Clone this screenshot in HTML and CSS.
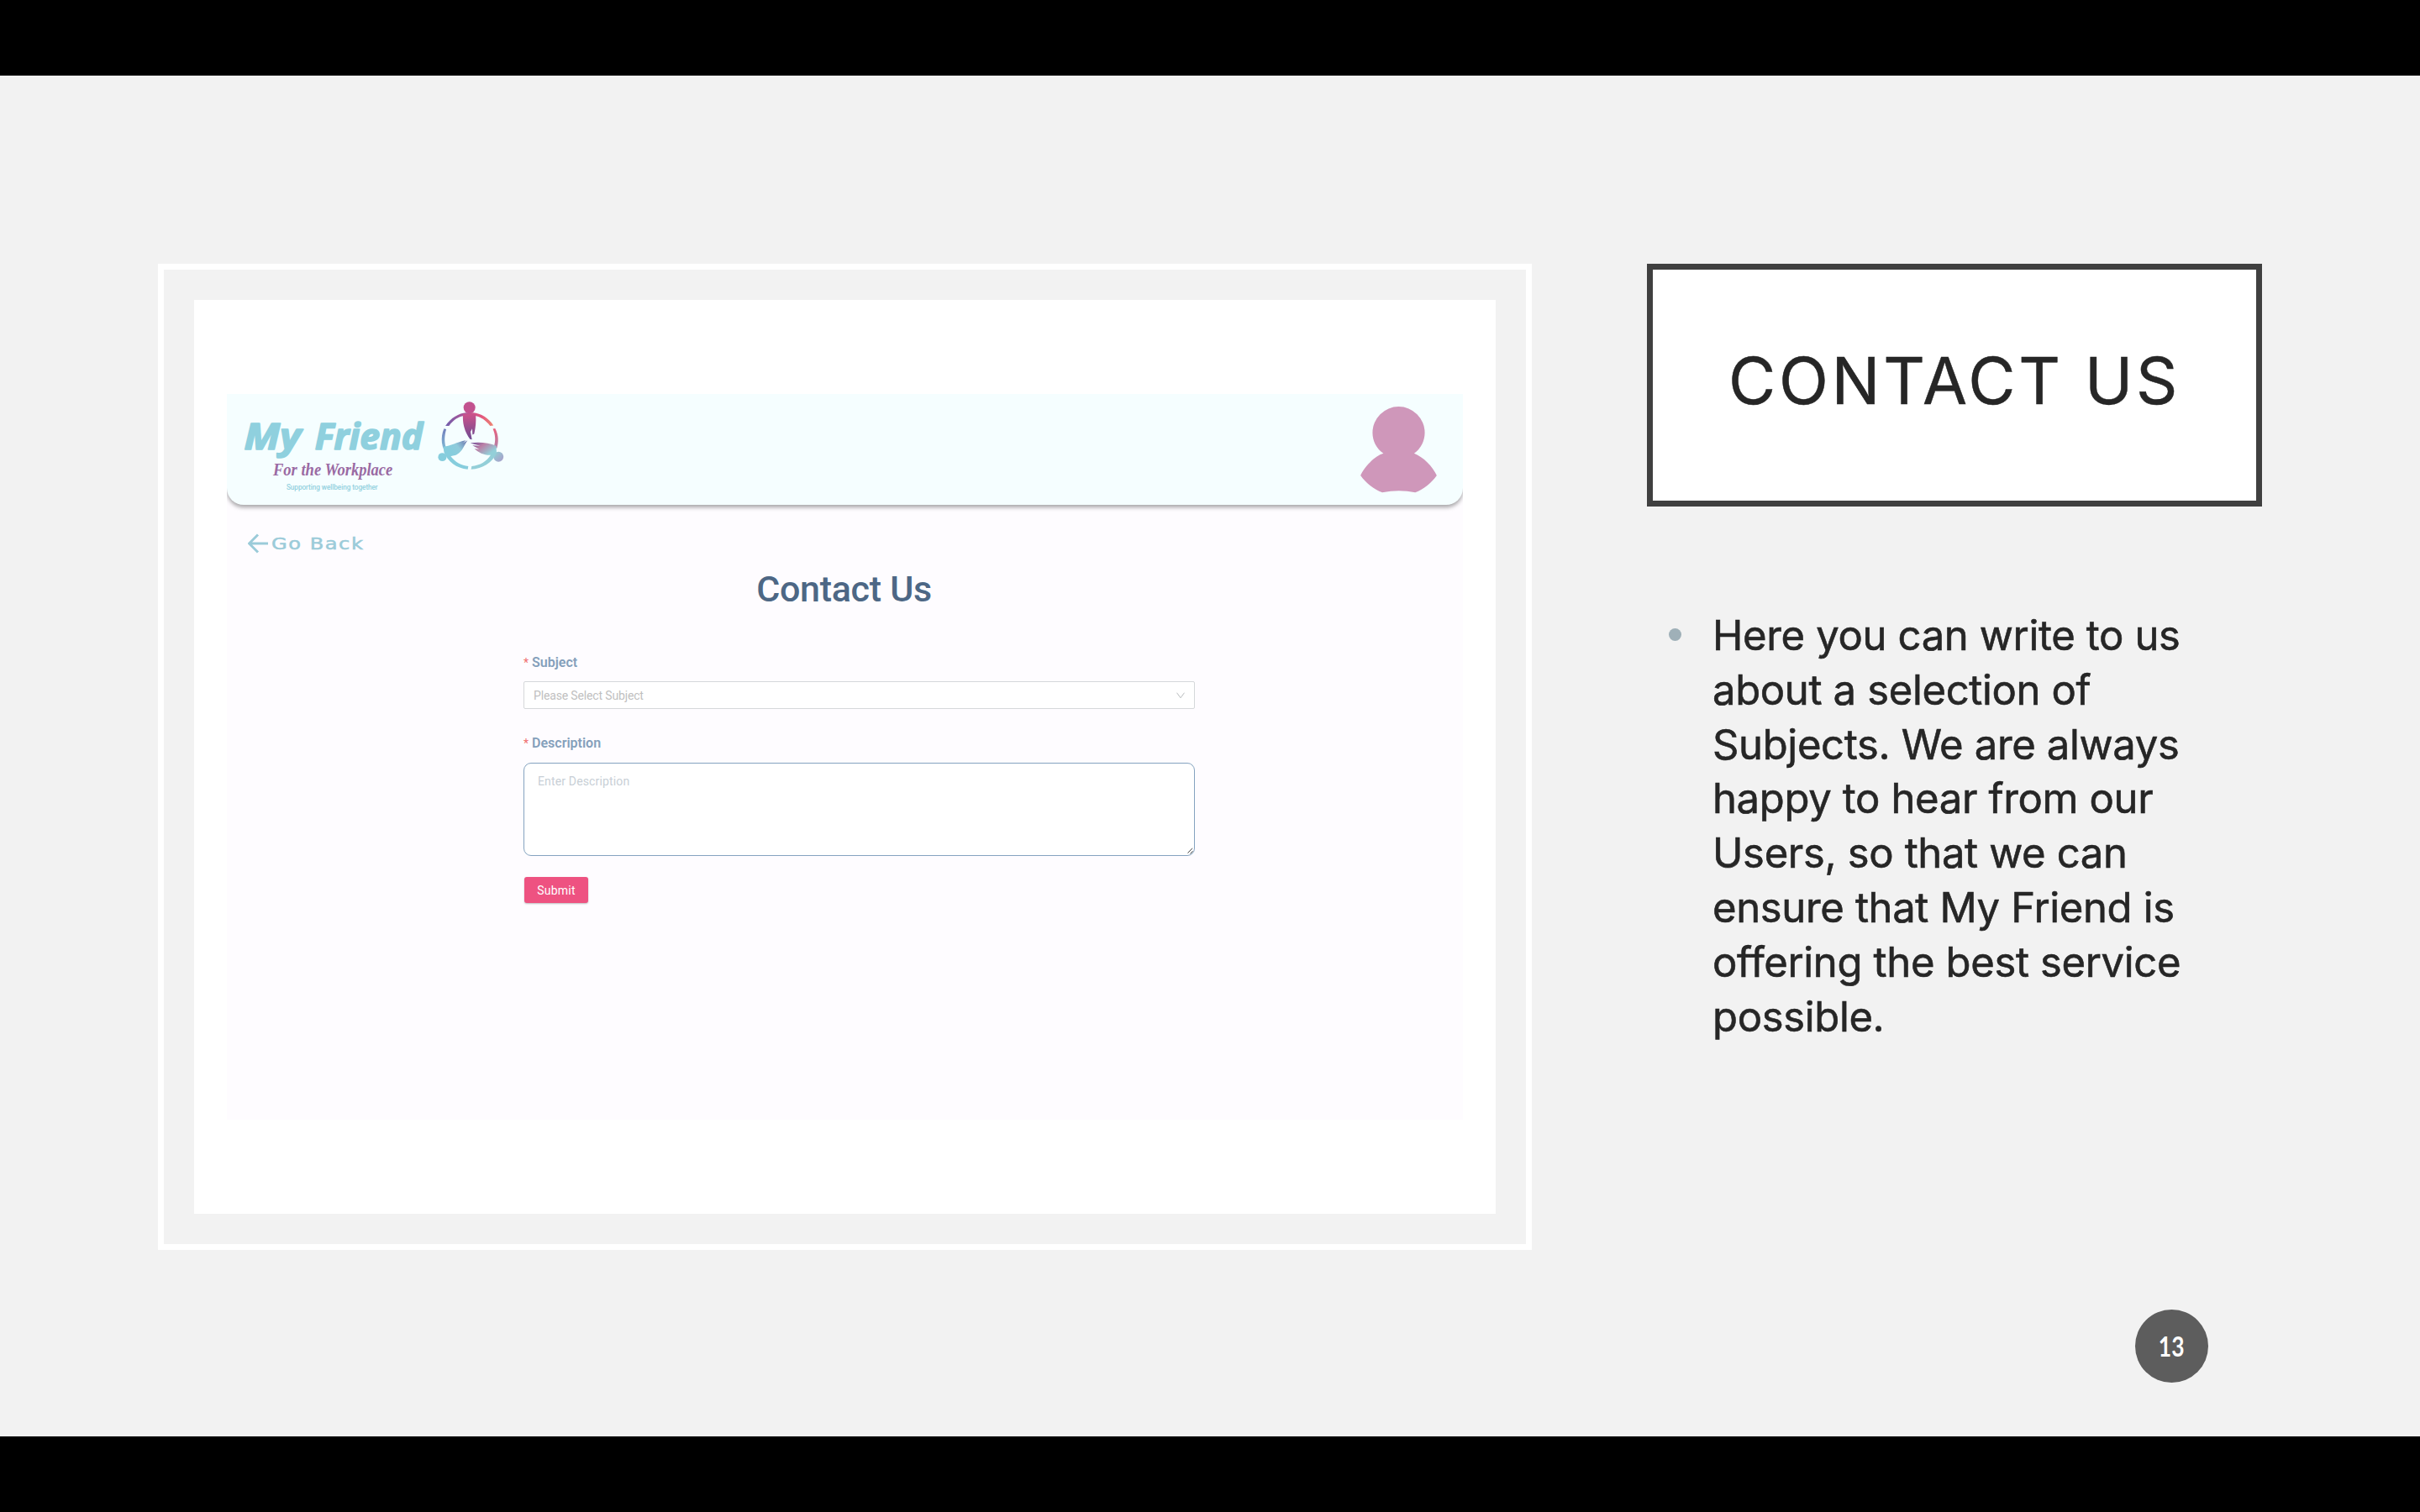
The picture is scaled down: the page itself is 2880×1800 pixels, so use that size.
FILE: index.html
```
<!DOCTYPE html>
<html lang="en">
<head>
    <meta charset="UTF-8">
    <meta name="viewport" content="width=device-width, initial-scale=1.0">
    <title>Contact Us</title>
    <link rel="stylesheet" href="styles.css">
</head>
<body>

    <main class="slide">

        <!-- app preview -->
        <div class="frame">
            <div class="picture">
                <div class="app">

                    <header class="app-header">
                        <svg class="logo" viewBox="72 45 960 340">
                            <defs>
                                <linearGradient id="top" gradientUnits="userSpaceOnUse" x1="810" y1="0" x2="984" y2="0">
                                    <stop offset="0" stop-color="#6f5fae"/>
                                    <stop offset=".5" stop-color="#c2528f"/>
                                    <stop offset=".75" stop-color="#e2577f"/>
                                    <stop offset="1" stop-color="#ee8a72"/>
                                </linearGradient>
                                <linearGradient id="body" x1="0" y1="0" x2="0" y2="1">
                                    <stop offset="0" stop-color="#cb528b"/>
                                    <stop offset="1" stop-color="#6d4b92"/>
                                </linearGradient>
                                <linearGradient id="left" gradientUnits="userSpaceOnUse" x1="890" y1="192" x2="835" y2="235">
                                    <stop offset="0" stop-color="#6a6fab"/>
                                    <stop offset=".6" stop-color="#8fcbdb"/>
                                    <stop offset="1" stop-color="#86cddd"/>
                                </linearGradient>
                                <linearGradient id="right" gradientUnits="userSpaceOnUse" x1="915" y1="200" x2="955" y2="252">
                                    <stop offset="0" stop-color="#7d5599"/>
                                    <stop offset=".4" stop-color="#bb7fa6"/>
                                    <stop offset="1" stop-color="#93cfd8"/>
                                </linearGradient>
                                <linearGradient id="sideLeft" x1="0" y1="0" x2="0" y2="1">
                                    <stop offset="0" stop-color="#7180bd"/>
                                    <stop offset="1" stop-color="#86cddd"/>
                                </linearGradient>
                                <linearGradient id="sideRight" x1="0" y1="0" x2="0" y2="1">
                                    <stop offset="0" stop-color="#e9607c"/>
                                    <stop offset="1" stop-color="#b183aa"/>
                                </linearGradient>
                                <linearGradient id="headRight" x1="0" y1="0" x2="1" y2="1">
                                    <stop offset="0" stop-color="#93d3d6"/>
                                    <stop offset="1" stop-color="#a99ac9"/>
                                </linearGradient>
                            </defs>

                            <text class="logo-name" x="90" y="226" textLength="204" lengthAdjust="spacingAndGlyphs">My</text>
                            <text class="logo-name" x="344" y="226" textLength="386" lengthAdjust="spacingAndGlyphs">Friend</text>
                            <text class="logo-sub" x="194" y="320" textLength="428" lengthAdjust="spacingAndGlyphs">For the Workplace</text>
                            <text class="logo-tag" x="242" y="369" textLength="327" lengthAdjust="spacingAndGlyphs">Supporting wellbeing together</text>

                            <!-- top figure -->
                            <circle cx="897" cy="76" r="21" fill="#c2528f"/>
                            <path fill="url(#top)" d="M811 141C831 112 860 96 885 94L910 94C938 96 966 113 983 140L971 141C956 121 936 108 916 105L878 105C857 108 838 121 824 141Z"/>
                            <path fill="url(#body)" d="M874 100L919 100C922 125 919 146 914 170L908 173L907 151L901 162L906 190L899 189C885 170 871 140 874 100Z"/>
                            <!-- left figure -->
                            <circle cx="800" cy="253" r="15" fill="#86cddd"/>
                            <path fill="url(#sideLeft)" d="M806 151L814 153C807 178 807 196 812 216L819 250C796 220 792 183 806 151Z"/>
                            <path fill="url(#left)" d="M804 216C832 213 850 199 884 193L875 202L890 193C878 211 873 228 859 239C847 249 835 248 830 250C848 272 867 282 893 286L891 297C850 293 819 268 806 235Z"/>
                            <!-- right figure -->
                            <circle cx="1001" cy="252" r="18" fill="url(#headRight)"/>
                            <path fill="url(#sideRight)" d="M981 152L989 150C1002 173 1002 200 995 222L984 218C992 195 990 173 981 152Z"/>
                            <path fill="url(#right)" d="M900 203C931 198 967 202 993 213L994 238C980 272 944 294 903 297L905 286C935 283 958 269 973 246C949 247 930 236 915 223L932 225L908 211L936 213Z"/>
                        </svg>

                        <svg class="avatar" viewBox="174 70 279 313">
                            <path d="M259 241C234 224 220 196 220 167A93.500 94 0 0 1 407 167C407 196 393 224 369 241C402 254 435 287 450 320C432 346 403 370 373 381Q315 368 255 381C225 370 195 346 177 320C190 291 227 250 259 241Z"/>
                        </svg>
                    </header>

                    <a class="back">
                        <svg class="back-arrow" viewBox="0 0 24 24">
                            <path d="M24 12H2M12 1.500L1.500 12L12 22.500"/>
                        </svg>
                        <span>Go Back</span>
                    </a>

                    <h1 class="app-title">Contact Us</h1>

                    <form class="form">
                        <label class="label"><span class="star">*</span>Subject</label>
                        <div class="select">
                            <span>Please Select Subject</span>
                            <svg class="chevron" viewBox="0 0 10 8">
                                <path d="M.5 .7L5 6.800L9.500 .7"/>
                            </svg>
                        </div>

                        <label class="label label-desc"><span class="star">*</span>Description</label>
                        <div class="textarea">
                            <span>Enter Description</span>
                            <svg class="grip" viewBox="0 0 7 8">
                                <path d="M.5 6.500L6 .8M3.500 7.500L6.500 4.200"/>
                            </svg>
                        </div>

                        <button class="submit" type="button">Submit</button>
                    </form>

                </div>
            </div>
        </div>

        <!-- slide text -->
        <div class="side">
            <h2 class="title">CONTACT US</h2>
            <ul class="notes">
                <li>Here you can write to us<br>about a selection of<br>Subjects. We are always<br>happy to hear from our<br>Users, so that we can<br>ensure that My Friend is<br>offering the best service<br>possible.</li>
            </ul>
            <div class="page-number"><span>13</span></div>
        </div>

    </main>

</body>
</html>
```
FILE: styles.css
```
*{
    box-sizing: border-box;
}

body{
    margin: 0;
    height: 1800px;
    padding: 90px 0;
    background-color: #000;
    font-family: Roboto, sans-serif;
}

.slide{
    display: flex;
    align-items: flex-start;
    height: 1620px;
    padding: 224px 188px 0;
    gap: 137px;
    background-color: #f2f2f2;
}

/* framed picture */
.frame{
    flex: none;
    width: 1635px;
    height: 1174px;
    padding: 36px;
    border: 7px solid #fff;
}

.picture{
    height: 1088px;
    padding: 112px 39px 0;
    background-color: #fff;
}

.app{
    height: 864px;
    background-color: #fefcff;
}

.app-header{
    display: flex;
    justify-content: space-between;
    align-items: flex-start;
    height: 132px;
    padding: 6px 30px 0 14px;
    border-radius: 0 0 20px 20px;
    background-color: #f5feff;
    box-shadow: 0 3px 5px rgba(0, 0, 0, 0.35);
    clip-path: inset(0 0 -12px 0);
}

.logo{
    width: 320px;
    height: 113px;
}

.logo-name{
    font: italic 700 130px "Open Sans", sans-serif;
    fill: #8fd0de;
    stroke: #8fd0de;
    stroke-width: 5;
    stroke-linejoin: round;
}

.logo-sub{
    font: italic 700 66px "Liberation Serif", serif;
    fill: #9a6aa3;
}

.logo-tag{
    font: 27px Roboto, sans-serif;
    fill: #8fd0de;
    stroke: #8fd0de;
    stroke-width: 0.5;
}

.avatar{
    width: 93px;
    height: 104px;
    margin-top: 8px;
    fill: #cf97ba;
}

.back{
    display: flex;
    align-items: center;
    gap: 4px;
    height: 24px;
    margin: 34px 0 0 25px;
    color: #9bcbd9;
    font: 19px/24px "DejaVu Sans", sans-serif;
}

.back span{
    letter-spacing: 1.2px;
    transform: scaleX(1.27);
    transform-origin: left;
    -webkit-text-stroke: 0.5px #9bcbd9;
}

.back-arrow{
    width: 24px;
    height: 24px;
    fill: none;
    stroke: #9bcbd9;
    stroke-width: 3;
}

.app-title{
    margin: 16px 2px 0 0;
    color: #4d6785;
    font-size: 43px;
    font-weight: 500;
    line-height: 52px;
    letter-spacing: -0.300px;
    text-align: center;
}

/* form */
.form{
    display: flex;
    flex-direction: column;
    align-items: flex-start;
    width: 799px;
    margin: 52px 0 0 353px;
}

.label{
    display: flex;
    gap: 4px;
    height: 20px;
    color: #85a0bb;
    font-size: 16px;
    font-weight: 600;
    line-height: 20px;
}

.star{
    color: #f0706f;
    font-size: 14px;
    font-weight: 400;
}

.select{
    display: flex;
    justify-content: space-between;
    align-items: center;
    width: 799px;
    height: 33px;
    margin-top: 12px;
    padding: 0 11px;
    border: 1px solid #d5d8da;
    border-radius: 2px;
    background-color: #fff;
    color: #bfbfbf;
    font-size: 14px;
    letter-spacing: -0.150px;
}

.chevron{
    width: 10px;
    height: 8px;
    fill: none;
    stroke: #b9bcbe;
}

.label-desc{
    margin-top: 31px;
}

.textarea{
    display: flex;
    justify-content: space-between;
    width: 799px;
    height: 111px;
    margin-top: 13px;
    padding: 12px 1px 1px 16px;
    border: 1px solid #85a3c0;
    border-radius: 9px;
    background-color: #fff;
    color: #c8cfd6;
    font-size: 14px;
    line-height: 18px;
    letter-spacing: 0.150px;
}

.grip{
    align-self: flex-end;
    width: 7px;
    height: 8px;
    fill: none;
    stroke: #444;
}

.submit{
    width: 76px;
    height: 31px;
    margin: 25px 0 0 1px;
    padding: 0;
    border: none;
    border-radius: 3px;
    background-color: #ee5281;
    box-shadow: 0 1px 2px rgba(0, 0, 0, 0.25);
    color: #fff;
    font: 14px Roboto, sans-serif;
    letter-spacing: 0.200px;
}

/* right column */
.side{
    display: flex;
    flex: none;
    flex-direction: column;
    width: 732px;
    font-family: Inter, "Liberation Sans", sans-serif;
    color: #262626;
}

.title{
    height: 289px;
    margin: 0;
    border: 7px solid #404040;
    background-color: #fff;
    font-size: 77px;
    font-weight: 400;
    line-height: 265px;
    letter-spacing: 3.700px;
    text-align: center;
    -webkit-text-stroke: 0.5px #262626;
}

.notes{
    margin: 122px 0 0;
    padding: 0;
    list-style: none;
    font-size: 49px;
    line-height: 64.800px;
    letter-spacing: -0.350px;
    white-space: nowrap;
    -webkit-text-stroke: 0.6px #262626;
}

.notes li{
    display: flow-root;
    padding-left: 78px;
}

.notes li::before{
    content: "";
    float: left;
    width: 15px;
    height: 15px;
    margin: 23px 0 0 -52px;
    border-radius: 50%;
    background-color: #9fb0b8;
}

.page-number{
    width: 87px;
    height: 87px;
    margin: 316px 0 0 581px;
    border-radius: 50%;
    background-color: #5d5d5d;
    color: #fff;
    font: 700 33px/87px Lato, sans-serif;
    text-align: center;
}

.page-number span{
    display: inline-block;
    transform: scaleX(0.8);
}
```
